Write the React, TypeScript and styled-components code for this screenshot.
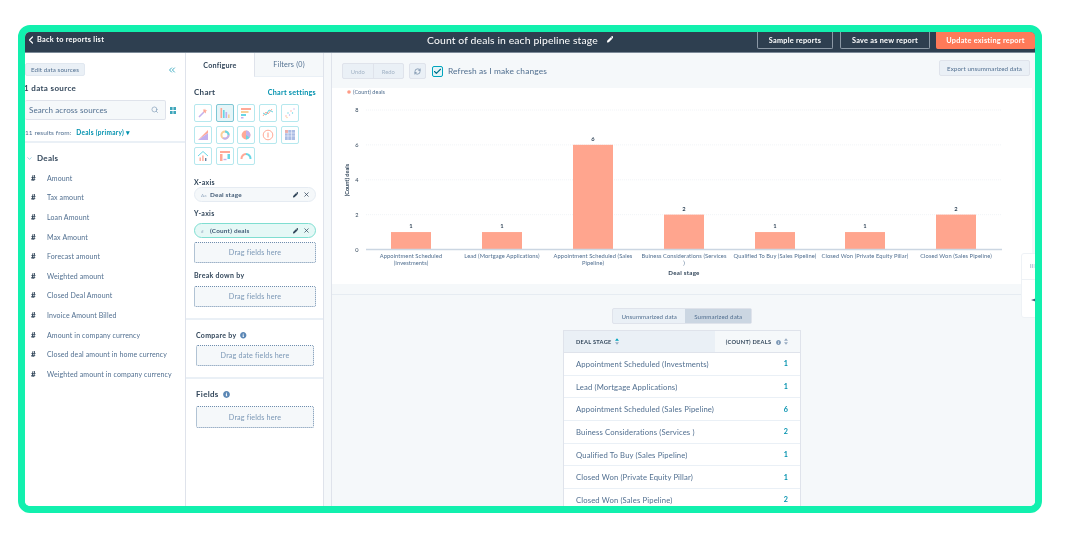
import React from 'react';
import styled, { createGlobalStyle } from 'styled-components';
import { ChevronLeft, ChevronsLeft, ChevronDown, Search, X, Check, RefreshCw } from 'lucide-react';
import { FaPen, FaInfoCircle } from 'react-icons/fa';

const Global = createGlobalStyle`
  html, body { margin: 0; padding: 0; background: #fff; }
  * { box-sizing: border-box; }
  body { font-family: "Lato", "Liberation Sans", sans-serif; color: #33475b; }
`;

const Page = styled.div`
  width: 1065px; height: 536px; padding: 25px 23px 23px 18px; background: #fff; overflow: hidden;
  filter: blur(0.45px);
`;
const Frame = styled.div`
  width: 1024px; height: 488px; border: 7px solid #12f0ae; border-radius: 12px; overflow: hidden;
  display: flex; flex-direction: column; background: #fff; position: relative;
`;
const Header = styled.header`
  height: 21px; flex: none; display: flex; align-items: flex-start; background: #2e3f50;
  border-bottom: 1px solid #7c8a98; color: #fff;
`;
const Back = styled.div`
  width: 402px; height: 20px; display: flex; align-items: center; gap: 0; padding: 0 0 5px 0;
  font-size: 7.3px; font-weight: 700; letter-spacing: .3px;
`;
const Title = styled.div`
  flex: 1; height: 20px; display: flex; align-items: center; gap: 9px; padding-bottom: 5px;
  font-size: 10.4px; letter-spacing: .12px;
`;
const HeadBtn = styled.div<{ $w: number; $primary?: boolean }>`
  width: ${p => p.$w}px; height: 17px; margin-left: ${p => (p.$primary ? 6 : 7)}px; flex: none;
  display: flex; align-items: center; justify-content: center;
  font-size: 7.3px; font-weight: 700; letter-spacing: .25px; border-radius: 0 0 2px 2px;
  background: ${p => (p.$primary ? '#ff7a59' : '#2e3f50')};
  border: 1px solid ${p => (p.$primary ? '#ff7a59' : '#8c99a6')};
  border-top: 0;
`;
const Body = styled.div`
  flex: 1; display: flex; min-height: 0;
`;
const Sources = styled.aside`
  width: 161px; flex: none; border-right: 1px solid #dfe3eb; background: #fff; overflow: hidden;
`;
const SourcesTop = styled.div`
  height: 90px; border-bottom: 2px solid #eaf0f6; padding-top: 10px; display: flex; flex-direction: column;
`;
const EditRow = styled.div`
  display: flex; align-items: center; justify-content: space-between; padding-right: 8px; height: 13px; color: #0091ae;
`;
const EditBtn = styled.div`
  width: 60px; height: 13px; background: #eaf0f6; border: 1px solid #e1e8f0; border-radius: 2px;
  font-size: 6.2px; color: #516f90; display: flex; align-items: center; justify-content: center; letter-spacing: .1px;
`;
const SourceTitle = styled.div`
  margin: 7px 0 0 -1px; height: 10px; line-height: 10px; font-size: 8px; font-weight: 700; letter-spacing: .35px;
`;
const SearchRow = styled.div`
  margin-top: 7px; height: 20px; display: flex; align-items: center; gap: 4px;
`;
const SearchBox = styled.div`
  width: 141px; height: 20px; background: #f5f8fa; border: 1px solid #dfe3eb; border-left: 0; border-radius: 2px;
  padding: 0 7px 0 4px; display: flex; align-items: center; justify-content: space-between;
  font-size: 8px; color: #516f90; letter-spacing: .1px;
`;
const Results = styled.div`
  margin: 8px 0 0 0; height: 10px; line-height: 10px; font-size: 6.5px; color: #516f90; letter-spacing: .1px; white-space: nowrap;
  b { color: #0091ae; font-weight: 700; margin-left: 3px; letter-spacing: .3px; }
`;
const Group = styled.div`
  margin-top: 5px; height: 20px; padding-left: 1px; display: flex; align-items: center; gap: 4px; font-size: 8px; font-weight: 700; color: #33475b; letter-spacing: .3px;
  svg { color: #5cc0d0; }
`;
const Field = styled.div`
  height: 19.6px; display: flex; align-items: center; font-size: 7px; color: #516f90; letter-spacing: .12px; white-space: nowrap;
`;
const Hash = styled.span`
  width: 22px; padding-left: 6px; font-size: 8px; font-weight: 900; color: #33475b;
`;
const Config = styled.section`
  width: 138px; flex: none; border-right: 1px solid #dfe3eb; background: #fff;
`;
const Tabs = styled.div`
  height: 24px; display: flex;
`;
const Tab = styled.div<{ $on?: boolean }>`
  flex: 1; display: flex; align-items: center; justify-content: center;
  font-size: 7.2px; letter-spacing: .2px; font-weight: ${p => (p.$on ? 700 : 400)};
  color: ${p => (p.$on ? '#33475b' : '#516f90')};
  background: ${p => (p.$on ? '#fff' : '#f5f8fa')};
  border-left: ${p => (p.$on ? '0' : '1px solid #dfe3eb')};
  border-bottom: ${p => (p.$on ? '0' : '1px solid #eaf0f6')};
`;
const Section = styled.div<{ $inset?: boolean; $last?: boolean }>`
  padding: ${p => (p.$inset ? '10px 9px 11px 10px' : '10px 7px 11px 8px')};
  border-bottom: ${p => (p.$last ? '0' : '2px solid #eaf0f6')};
`;
const Label = styled.div<{ $mt?: number; $large?: boolean }>`
  height: 10px; line-height: 10px; margin-top: ${p => p.$mt ?? 0}px; display: flex; align-items: center; gap: 4px;
  font-size: ${p => (p.$large ? 8 : 7)}px; font-weight: 700; letter-spacing: .3px; color: #33475b;
  svg { color: #5b87b5; }
`;
const ChartHead = styled.div`
  display: flex; justify-content: space-between; align-items: center; height: 10px;
  font-size: 8px; font-weight: 700; letter-spacing: .3px;
  span:last-child { font-size: 7.2px; color: #0091ae; letter-spacing: .25px; }
`;
const Tiles = styled.div`
  margin-top: 7px; display: grid; grid-template-columns: repeat(5, 18px); gap: 3.7px;
`;
const Tile = styled.div<{ $on?: boolean }>`
  width: 18px; height: 18px; border-radius: 2px; display: flex; align-items: center; justify-content: center;
  border: 1.2px solid ${p => (p.$on ? '#7fc7d4' : '#b5e8ee')};
  background: ${p => (p.$on ? '#e5f5f8' : '#fff')};
`;
const TileIcon = styled.svg`
  width: 12px; height: 12px; opacity: .85;
`;
const Pill = styled.div<{ $teal?: boolean; $mt: number }>`
  height: 15px; margin-top: ${p => p.$mt}px; border-radius: 8px; padding: 0 5px 0 6px;
  display: flex; align-items: center; gap: 4px; font-size: 6.4px; font-weight: 700; letter-spacing: .2px; color: #425b76;
  background: ${p => (p.$teal ? '#e5f8f6' : '#f5f8fa')};
  border: 1px solid ${p => (p.$teal ? '#7fded1' : '#e5ebf2')};
`;
const PillMark = styled.span`
  width: 5px; font-size: 4.6px; color: #99acc2; font-weight: 400;
`;
const PillName = styled.span`
  flex: 1;
`;
const PillActions = styled.span`
  display: flex; align-items: center; gap: 5px; color: #33475b;
`;
const Drop = styled.div<{ $mt: number; $h?: number }>`
  height: ${p => p.$h ?? 21}px; margin-top: ${p => p.$mt}px; background: #f5f8fa; border: 1px dotted #6f8dae; border-radius: 2px;
  display: flex; align-items: center; justify-content: center; font-size: 7.2px; color: #7c98b6; letter-spacing: .15px;
`;
const Gutter = styled.div`
  width: 8px; flex: none; background: #f5f8fa; border-right: 1px solid #dfe3eb;
`;
const Main = styled.main`
  flex: 1; min-width: 0; background: #f5f8fa; position: relative; overflow: hidden;
`;
const Toolbar = styled.div`
  height: 35px; display: flex; align-items: flex-start; padding: 10px 5px 0 10px;
`;
const BtnGroup = styled.div`
  width: 62px; height: 16px; display: flex; background: #eaf0f6; border: 1px solid #dfe3eb; border-radius: 2px;
`;
const GroupBtn = styled.div<{ $split?: boolean }>`
  flex: 1; display: flex; align-items: center; justify-content: center; font-size: 5.8px; color: #a3b4c6;
  border-left: ${p => (p.$split ? '1px solid #dfe3eb' : '0')};
`;
const IconBtn = styled.div`
  width: 17px; height: 16px; margin-left: 5px; background: #eaf0f6; border: 1px solid #dfe3eb; border-radius: 2px;
  display: flex; align-items: center; justify-content: center; color: #516f90;
`;
const CheckBox = styled.div`
  width: 11px; height: 11px; margin: 3px 5px 0 6px; background: #e5f5f8; border: 1px solid #00a4bd; border-radius: 2px;
  display: flex; align-items: center; justify-content: center; color: #00708a;
`;
const CheckText = styled.div`
  flex: 1; height: 16px; line-height: 17px; font-size: 8.4px; color: #516f90; letter-spacing: .12px;
`;
const Export = styled.div`
  width: 91px; height: 16px; margin-top: -3px; background: #eaf0f6; border: 1px solid #dfe3eb; border-radius: 2px;
  display: flex; align-items: center; justify-content: center; font-size: 6.2px; color: #516f90; letter-spacing: .1px;
`;
const ChartCard = styled.div`
  width: 700px; height: 196px; background: #fff;
  svg { display: block; font-family: "Lato", "Liberation Sans", sans-serif; }
`;
const Band = styled.div`
  height: 11px; border-bottom: 1px solid #e6ecf2;
`;
const Lower = styled.div`
  display: flex; flex-direction: column; align-items: center; padding: 13px 3px 0 0;
`;
const Toggle = styled.div`
  width: 140px; height: 16px; display: flex; border: 1px solid #dfe3eb; border-radius: 2px; background: #eaf0f6;
`;
const ToggleItem = styled.div<{ $on?: boolean; $w: number }>`
  width: ${p => p.$w}px; display: flex; align-items: center; justify-content: center; font-size: 6.2px; color: #516f90; letter-spacing: .1px;
  background: ${p => (p.$on ? '#cbd6e2' : 'transparent')};
`;
const Table = styled.table`
  width: 238px; margin-top: 6px; border-collapse: separate; border-spacing: 0; background: #fff;
  border-left: 1px solid #dfe3eb; border-right: 1px solid #dfe3eb; border-top: 1px solid #dfe3eb; table-layout: fixed;
`;
const HeadCell = styled.th<{ $right?: boolean }>`
  height: 22px; padding: 0 ${p => (p.$right ? '12px' : '0')} 0 ${p => (p.$right ? '0' : '12px')};
  text-align: ${p => (p.$right ? 'right' : 'left')}; font-size: 5.7px; font-weight: 700; letter-spacing: .25px; color: #33475b;
  background: ${p => (p.$right ? '#f5f8fa' : '#eaf0f6')}; border-bottom: 1px solid #dfe3eb;
  svg { margin-left: 3px; vertical-align: -1px; }
`;
const Cell = styled.td<{ $right?: boolean }>`
  height: 22.7px; padding: 0 ${p => (p.$right ? '12px' : '0')} 0 ${p => (p.$right ? '0' : '12px')};
  text-align: ${p => (p.$right ? 'right' : 'left')};
  font-size: ${p => (p.$right ? 7.2 : 7.7)}px; font-weight: ${p => (p.$right ? 700 : 400)}; letter-spacing: .13px;
  color: ${p => (p.$right ? '#0091ae' : '#516f90')}; border-bottom: 1.5px solid #eaf0f6; white-space: nowrap;
`;
const Float = styled.div`
  position: absolute; left: 689px; top: 200px; width: 24px; height: 65px; background: #fff; border: 1px solid #eef2f6; border-radius: 3px;
  display: flex; flex-direction: column;
`;
const FloatTop = styled.div`
  height: 26px; padding: 8px 0 0 8px; font-size: 6px; color: #7c98b6; border-bottom: 1px solid #eef2f6; letter-spacing: .4px;
`;
const FloatBottom = styled.div`
  flex: 1; padding: 9px 0 0 9px; color: #425b76;
`;

const c = { p: '#b9a4ec', t: '#4fd0e0', o: '#ff9b85', y: '#f8c98a', b: '#7c98d6', g: '#8fdfd3', n: '#516f90' };
const icons: React.ReactNode[] = [
  <><path d="M2 10 7 5" stroke={c.p} strokeWidth="1.6" /><path d="M8 1.5 8.6 3.2 10.3 3.6 8.8 4.6 9 6.4 7.6 5.2 6 5.6 6.7 4 5.8 2.6 7.5 2.8Z" fill={c.o} /></>,
  <><rect x="1.5" y="1" width="1.6" height="10" fill={c.o} /><rect x="4" y="3" width="1.6" height="8" fill={c.t} /><rect x="6.5" y="5" width="1.6" height="6" fill={c.p} /><rect x="9" y="7.5" width="1.6" height="3.5" fill={c.y} /></>,
  <><rect x="1" y="1" width="10" height="2" fill={c.o} /><rect x="1" y="4" width="7.5" height="2" fill={c.y} /><rect x="1" y="7" width="5" height="2" fill={c.t} /><rect x="1" y="10" width="2.5" height="1.5" fill={c.p} /></>,
  <><path d="M1 9 4 5 6 7 10 2" fill="none" stroke={c.o} strokeWidth="1" /><path d="M1 6 4 8 7 3 11 5" fill="none" stroke={c.t} strokeWidth="1" /></>,
  <>{[[2, 9, c.o], [4, 6, c.t], [5.5, 8, c.p], [7, 4, c.o], [8.5, 6, c.t], [10, 2, c.p], [3, 10.5, c.y]].map(([x, y, f], i) => <circle key={i} cx={x as number} cy={y as number} r=".7" fill={f as string} />)}</>,
  <><path d="M1 11 11 1V4L1 11Z" fill={c.o} /><path d="M1 11 11 4V11Z" fill={c.p} /></>,
  <><circle cx="6" cy="6" r="3.6" fill="none" stroke={c.y} strokeWidth="2" /><path d="M6 2.4A3.6 3.6 0 0 1 9.6 6" fill="none" stroke={c.t} strokeWidth="2" /><path d="M9.6 6A3.6 3.6 0 0 1 4 9" fill="none" stroke={c.p} strokeWidth="2" /></>,
  <><circle cx="6" cy="6" r="4.4" fill={c.o} /><path d="M6 6V1.6A4.4 4.4 0 0 1 9.6 8.5Z" fill={c.p} /><path d="M6 6 9.6 8.5A4.4 4.4 0 0 1 6 10.4Z" fill={c.t} /></>,
  <><circle cx="6" cy="6" r="4.8" fill="none" stroke={c.o} strokeWidth="1" /><path d="M6 3.5V8.5" stroke={c.o} strokeWidth="1.2" /></>,
  <><rect x="1" y="1" width="10" height="10" fill={c.b} opacity=".75" /><path d="M1 4H11M1 7H11M4 1V11M7.5 1V11" stroke="#fff" strokeWidth=".5" /><rect x="1" y="1" width="3" height="3" fill={c.o} opacity=".7" /></>,
  <><path d="M1 6 6 1.5 11 6" fill="none" stroke={c.t} strokeWidth="1" /><rect x="2.5" y="7.5" width="1.4" height="3.5" fill={c.o} /><rect x="5.2" y="5.5" width="1.4" height="5.5" fill={c.o} /><rect x="8" y="8" width="1.4" height="3" fill={c.n} /></>,
  <><rect x="1" y="1" width="10" height="2" fill={c.o} /><rect x="1" y="4" width="2.5" height="7" fill={c.o} /><rect x="8.5" y="4" width="2.5" height="5" fill={c.t} /><path d="M4.5 9.5H7.5" stroke={c.p} strokeWidth="1.4" /></>,
  <><path d="M1.5 9A4.6 4.6 0 0 1 6 4" fill="none" stroke={c.o} strokeWidth="2" /><path d="M6 4A4.6 4.6 0 0 1 10.5 9" fill="none" stroke={c.t} strokeWidth="2" /></>,
];

const fields = ['Amount', 'Tax amount', 'Loan Amount', 'Max Amount', 'Forecast amount', 'Weighted amount', 'Closed Deal Amount', 'Invoice Amount Billed', 'Amount in company currency', 'Closed deal amount in home currency', 'Weighted amount in company currency'];

const bars = [
  { x: 411, v: 1, l: ['Appointment Scheduled', '(Investments)'] },
  { x: 502, v: 1, l: ['Lead (Mortgage Applications)'] },
  { x: 593, v: 6, l: ['Appointment Scheduled (Sales', 'Pipeline)'] },
  { x: 684, v: 2, l: ['Buiness Considerations (Services', ')'] },
  { x: 775, v: 1, l: ['Qualified To Buy (Sales Pipeline)'] },
  { x: 865, v: 1, l: ['Closed Won (Private Equity Pillar)'] },
  { x: 956, v: 2, l: ['Closed Won (Sales Pipeline)'] },
];

const rows: [string, number][] = [
  ['Appointment Scheduled (Investments)', 1], ['Lead (Mortgage Applications)', 1], ['Appointment Scheduled (Sales Pipeline)', 6],
  ['Buiness Considerations (Services )', 2], ['Qualified To Buy (Sales Pipeline)', 1], ['Closed Won (Private Equity Pillar)', 1], ['Closed Won (Sales Pipeline)', 2],
];

const Sort = ({ active }: { active?: boolean }) => (
  <svg width="4" height="7" viewBox="0 0 5 8">
    <path d="M2.5 0 5 3H0Z" fill={active ? '#00a4bd' : '#99acc2'} />
    <path d="M2.5 8 0 5H5Z" fill="#99acc2" />
  </svg>
);

const BarChart = () => (
  <svg width="700" height="196" viewBox="332 88 700 196">
    <circle cx="349" cy="92" r="1.8" fill="#ff9b85" />
    <text x="353" y="94" fontSize="5.6" fill="#516f90">(Count) deals</text>
    {[8, 6, 4, 2, 0].map((t, i) => (
      <g key={t}>
        <text x="358.5" y={112 + i * 34.9} fontSize="5.6" textAnchor="end" fill="#33475b">{t}</text>
        {t > 0 && <line x1="366" x2="1002" y1={110 + i * 34.9} y2={110 + i * 34.9} stroke="#f1f4f7" strokeDasharray="1 1" />}
      </g>
    ))}
    <text transform="translate(349 180) rotate(-90)" fontSize="5.6" fontWeight="700" textAnchor="middle" fill="#33475b">(Count) deals</text>
    {bars.map(b => {
      const top = 249.5 - b.v * 17.45;
      return (
        <g key={b.x}>
          <rect x={b.x - 20} y={top} width="40" height={b.v * 17.45} fill="#ffa58e" />
          <text x={b.x} y={top - 4} fontSize="5.8" fontWeight="700" textAnchor="middle" fill="#33475b">{b.v}</text>
          {b.l.map((t, i) => (
            <text key={t} x={b.x} y={258 + i * 7} fontSize="5.75" letterSpacing=".08" textAnchor="middle" fill="#516f90">{t}</text>
          ))}
        </g>
      );
    })}
    <line x1="366" x2="1002" y1="249.5" y2="249.5" stroke="#cbd6e2" strokeWidth="1.3" />
    <text x="684" y="275" fontSize="6.2" fontWeight="700" letterSpacing=".25" textAnchor="middle" fill="#33475b">Deal stage</text>
  </svg>
);

export default function App() {
  return (
    <Page>
      <Global />
      <Frame>
        <Header>
          <Back><ChevronLeft size={12} strokeWidth={2.4} />Back to reports list</Back>
          <Title>Count of deals in each pipeline stage <FaPen size={6.5} /></Title>
          <HeadBtn $w={76}>Sample reports</HeadBtn>
          <HeadBtn $w={90}>Save as new report</HeadBtn>
          <HeadBtn $w={99} $primary>Update existing report</HeadBtn>
        </Header>
        <Body>
          <Sources>
            <SourcesTop>
              <EditRow>
                <EditBtn>Edit data sources</EditBtn>
                <ChevronsLeft size={10} strokeWidth={1.8} />
              </EditRow>
              <SourceTitle>1 data source</SourceTitle>
              <SearchRow>
                <SearchBox>Search across sources <Search size={7.5} color="#7c98b6" /></SearchBox>
                <svg width="6" height="7" viewBox="0 0 6 7" fill="#3fa6bb">
                  <rect width="2.6" height="3" /><rect x="3.4" width="2.6" height="3" /><rect y="4" width="2.6" height="3" /><rect x="3.4" y="4" width="2.6" height="3" />
                </svg>
              </SearchRow>
              <Results>11 results from: <b>Deals (primary) ▾</b></Results>
            </SourcesTop>
            <Group><ChevronDown size={7} />Deals</Group>
            {fields.map(f => <Field key={f}><Hash>#</Hash>{f}</Field>)}
          </Sources>
          <Config>
            <Tabs>
              <Tab $on>Configure</Tab>
              <Tab>Filters (0)</Tab>
            </Tabs>
            <Section>
              <ChartHead><span>Chart</span><span>Chart settings</span></ChartHead>
              <Tiles>
                {icons.map((ic, i) => (
                  <Tile key={i} $on={i === 1}><TileIcon viewBox="0 0 12 12">{ic}</TileIcon></Tile>
                ))}
              </Tiles>
              <Label $mt={12}>X-axis</Label>
              <Pill $mt={0}>
                <PillMark>Aa</PillMark><PillName>Deal stage</PillName>
                <PillActions><FaPen size={5.5} /><X size={7} strokeWidth={2.6} /></PillActions>
              </Pill>
              <Label $mt={6}>Y-axis</Label>
              <Pill $mt={5} $teal>
                <PillMark>#</PillMark><PillName>(Count) deals</PillName>
                <PillActions><FaPen size={5.5} /><X size={7} strokeWidth={2.6} /></PillActions>
              </Pill>
              <Drop $mt={4}>Drag fields here</Drop>
              <Label $mt={7}>Break down by</Label>
              <Drop $mt={6}>Drag fields here</Drop>
            </Section>
            <Section $inset>
              <Label>Compare by <FaInfoCircle size={6.5} /></Label>
              <Drop $mt={5}>Drag date fields here</Drop>
            </Section>
            <Section $inset $last>
              <Label $large>Fields <FaInfoCircle size={7} /></Label>
              <Drop $mt={7} $h={22}>Drag fields here</Drop>
            </Section>
          </Config>
          <Gutter />
          <Main>
            <Toolbar>
              <BtnGroup>
                <GroupBtn>Undo</GroupBtn>
                <GroupBtn $split>Redo</GroupBtn>
              </BtnGroup>
              <IconBtn><RefreshCw size={7} /></IconBtn>
              <CheckBox><Check size={9} strokeWidth={3} /></CheckBox>
              <CheckText>Refresh as I make changes</CheckText>
              <Export>Export unsummarized data</Export>
            </Toolbar>
            <ChartCard><BarChart /></ChartCard>
            <Band />
            <Lower>
              <Toggle>
                <ToggleItem $w={73}>Unsummarized data</ToggleItem>
                <ToggleItem $w={66} $on>Summarized data</ToggleItem>
              </Toggle>
              <Table>
                <colgroup><col width="151" /><col width="85" /></colgroup>
                <thead>
                  <tr>
                    <HeadCell>DEAL STAGE<Sort active /></HeadCell>
                    <HeadCell $right>(COUNT) DEALS <FaInfoCircle size={5} color="#7c98b6" /><Sort /></HeadCell>
                  </tr>
                </thead>
                <tbody>
                  {rows.map(([n, v]) => (
                    <tr key={n}><Cell>{n}</Cell><Cell $right>{v}</Cell></tr>
                  ))}
                </tbody>
              </Table>
            </Lower>
            <Float>
              <FloatTop>III</FloatTop>
              <FloatBottom>
                <svg width="10" height="10" viewBox="0 0 10 10" fill="currentColor"><path d="M5 0 6.2 3.8 10 5 6.2 6.2 5 10 3.8 6.2 0 5 3.8 3.8Z" /></svg>
              </FloatBottom>
            </Float>
          </Main>
        </Body>
      </Frame>
    </Page>
  );
}
